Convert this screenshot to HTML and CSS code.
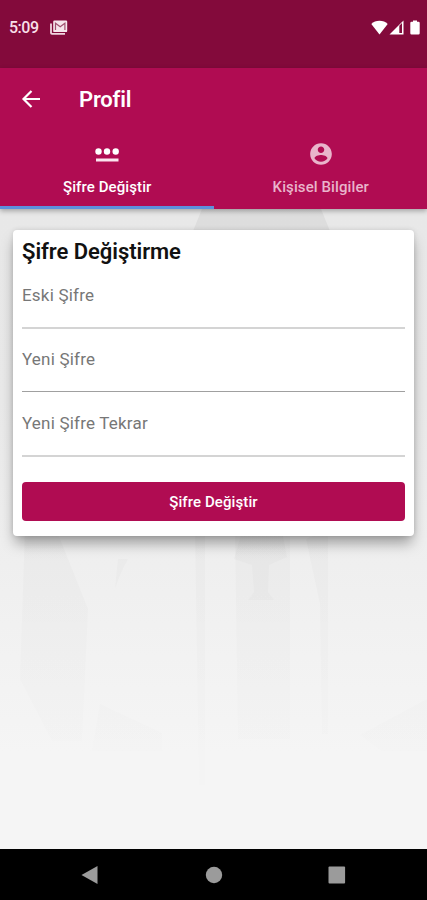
FILE: index.html
```
<!DOCTYPE html>
<html lang="tr">
<head>
  <meta charset="UTF-8">
  <meta name="viewport" content="width=device-width, initial-scale=1.0">
  <title>Profil</title>
  <link rel="stylesheet" href="styles.css">
</head>
<body>

  <div class="status-bar">
    <span class="time">5:09</span>
    <svg class="mail-icon" width="18" height="15" viewBox="0 0 18 15">
      <path d="M1 3.500V13q0 0.800 1 0.800h13" fill="none" stroke="#f0d5df" stroke-width="1.800"/>
      <rect x="3.200" y="0.500" width="14" height="11.600" rx="1.200" fill="#f6e5ec"/>
      <path d="M5.500 10V3.200l4.700 3.600 4.700-3.600V10" fill="none" stroke="#a0506f" stroke-width="1.200"/>
    </svg>
    <div class="status-icons">
      <svg width="17" height="15" viewBox="0 0 17 15">
        <path d="M8.500 14.500L0.300 4Q3.500 0.800 8.500 0.800T16.700 4z" fill="#fff"/>
      </svg>
      <svg width="15" height="15" viewBox="0 0 15 15">
        <path d="M0.500 14.500L14.500 0.500v14z" fill="#fff"/>
        <path d="M10.300 5.800l2.700-2.700v10h-2.700z" fill="#830a3b"/>
      </svg>
      <svg class="battery" width="10" height="15" viewBox="0 0 10 15">
        <path d="M3 0.500h4v1.200h1.500q1.200 0 1.200 1.200v10.400q0 1.200-1.200 1.200h-7q-1.200 0-1.200-1.200V2.900q0-1.200 1.200-1.200H3z" fill="#fff"/>
      </svg>
    </div>
  </div>

  <header class="header">
    <div class="title-bar">
      <svg class="back" width="20" height="20" viewBox="0 0 20 20">
        <path d="M19 10H3M10.500 2L2.500 10l8 8" fill="none" stroke="#fff" stroke-width="2.200"/>
      </svg>
      <h1>Profil</h1>
    </div>
    <nav class="tabs">
      <a class="tab active">
        <svg width="26" height="26" viewBox="0 0 26 26">
          <circle cx="4.500" cy="10.500" r="3.200" fill="#fff"/>
          <circle cx="13" cy="10.500" r="3.200" fill="#fff"/>
          <circle cx="21.700" cy="10.500" r="3.200" fill="#fff"/>
          <rect x="2" y="17.500" width="22.500" height="3" fill="#fbe4ee"/>
        </svg>
        <span>Şifre Değiştir</span>
      </a>
      <a class="tab">
        <svg width="26" height="26" viewBox="0 0 24 24">
          <path d="M12 2C6.480 2 2 6.480 2 12s4.480 10 10 10 10-4.480 10-10S17.520 2 12 2zm0 3c1.660 0 3 1.340 3 3s-1.340 3-3 3-3-1.340-3-3 1.340-3 3-3zm0 14.200c-2.500 0-4.710-1.280-6-3.220.030-1.990 4-3.080 6-3.080 1.990 0 5.970 1.090 6 3.080-1.290 1.940-3.500 3.220-6 3.220z" fill="currentColor"/>
        </svg>
        <span>Kişisel Bilgiler</span>
      </a>
    </nav>
  </header>

  <main class="content">
    <svg class="backdrop" width="427" height="640" viewBox="0 0 427 640">
      <defs>
        <linearGradient id="fade" gradientUnits="userSpaceOnUse" x1="0" y1="0" x2="0" y2="560">
          <stop offset="0" stop-color="#000" stop-opacity="0.050"/>
          <stop offset="0.600" stop-color="#000" stop-opacity="0.020"/>
          <stop offset="1" stop-color="#000" stop-opacity="0.004"/>
        </linearGradient>
      </defs>
      <g fill="url(#fade)">
        <path d="M202 0h119l9 22v100H193V22z"/>
        <path d="M195 320h10v256h-6z"/>
        <path d="M235 320h55v210h-52z"/>
        <path d="M25 320h31l32 80-6 132H52L20 470z"/>
        <path d="M306 330l22-10v205h-6l-2-130z"/>
        <path d="M100 495l62 29v18H92z"/>
        <path d="M427 490l-67 36 22 16h45z"/>
        <path d="M242 322h40l5 26-18 8-1 27 6 8h-26l6-8-2-27-18-6z"/>
        <path d="M118 350h10q-8 14-13 30z"/>
      </g>
    </svg>

    <form class="card">
      <h2>Şifre Değiştirme</h2>
      <div class="field">Eski Şifre</div>
      <div class="field thin">Yeni Şifre</div>
      <div class="field">Yeni Şifre Tekrar</div>
      <button type="button" class="submit">Şifre Değiştir</button>
    </form>
  </main>

  <footer class="nav-bar">
    <svg width="18" height="20" viewBox="0 0 18 20"><path d="M0.500 10L16.500 1v18z" fill="#9b9b9b"/></svg>
    <svg width="18" height="20" viewBox="0 0 18 20"><circle cx="9" cy="10" r="8.200" fill="#9b9b9b"/></svg>
    <svg width="18" height="20" viewBox="0 0 18 20"><rect x="0.500" y="1.600" width="16.600" height="16.800" rx="1" fill="#9b9b9b"/></svg>
  </footer>

</body>
</html>
```
FILE: styles.css
```
* {
  box-sizing: border-box;
}

body {
  margin: 0;
  height: 900px;
  display: flex;
  flex-direction: column;
  overflow: hidden;
  font-family: Roboto, sans-serif;
  background-color: #f4f4f4;
}

.status-bar {
  height: 68px;
  padding: 18px 7px 0 9px;
  display: flex;
  align-items: flex-start;
  background-color: #830a3b;
  color: #f8dfe8;
}

.time {
  font-size: 16px;
  font-weight: 500;
  line-height: 19px;
  letter-spacing: -0.5px;
  width: 41px;
}

.mail-icon {
  margin-top: 2px;
}

.status-icons {
  display: flex;
  margin-left: auto;
  gap: 1px;
}

.status-icons svg {
  margin-top: 2px;
}

.status-icons .battery {
  margin-left: 5px;
}

.header {
  height: 141px;
  background-color: #b00c52;
  color: #fff;
  position: relative;
  z-index: 1;
  box-shadow: 0 2px 5px rgba(0, 0, 0, 0.3);
}

.title-bar {
  height: 62px;
  padding-left: 21px;
  display: flex;
  align-items: center;
}

.title-bar h1 {
  margin: 0 0 0 38px;
  font-size: 22px;
  font-weight: 600;
  letter-spacing: -0.2px;
}

.tabs {
  height: 79px;
  display: flex;
}

.tab {
  flex: 1;
  padding: 11px 0 0 1px;
  display: flex;
  flex-direction: column;
  align-items: center;
  gap: 11px;
  font-size: 15px;
  font-weight: 500;
  line-height: 18px;
  letter-spacing: 0.1px;
  color: #e9b5cb;
  border-bottom: 3px solid transparent;
}

.tab.active {
  color: #fff;
  border-bottom-color: #5d91dc;
}

.content {
  flex: 1;
  position: relative;
  padding: 21px 13px;
  background: linear-gradient(#e8e8e8, #e9e9e9 30%, #f0f0f0 60%, #f5f5f5 85%);
}

.backdrop {
  position: absolute;
  top: 0;
  left: 0;
}

.card {
  position: relative;
  height: 306px;
  padding: 9px 9px 0;
  background-color: #fff;
  border-radius: 4px;
  box-shadow: 0 9px 14px -2px rgba(0, 0, 0, 0.35), 0 0 5px rgba(0, 0, 0, 0.12);
}

.card h2 {
  margin: 0;
  font-size: 22px;
  font-weight: 600;
  line-height: 26px;
  letter-spacing: -0.05px;
  color: #111;
}

.field {
  height: 64px;
  padding-top: 20px;
  font-size: 17px;
  line-height: 20px;
  letter-spacing: 0.2px;
  color: #777;
  border-bottom: 2px solid #d4d4d4;
}

.field.thin {
  height: 63px;
  margin-bottom: 1px;
  border-bottom: 1px solid #a0a0a0;
}

.submit {
  display: block;
  width: 100%;
  height: 39px;
  margin-top: 25px;
  border: none;
  border-radius: 4px;
  background-color: #b00c52;
  color: #fff;
  font-family: inherit;
  font-size: 15px;
  font-weight: 500;
  letter-spacing: 0.1px;
}

.nav-bar {
  height: 51px;
  padding: 0 81px;
  display: flex;
  align-items: center;
  justify-content: space-between;
  background-color: #000;
}
```
